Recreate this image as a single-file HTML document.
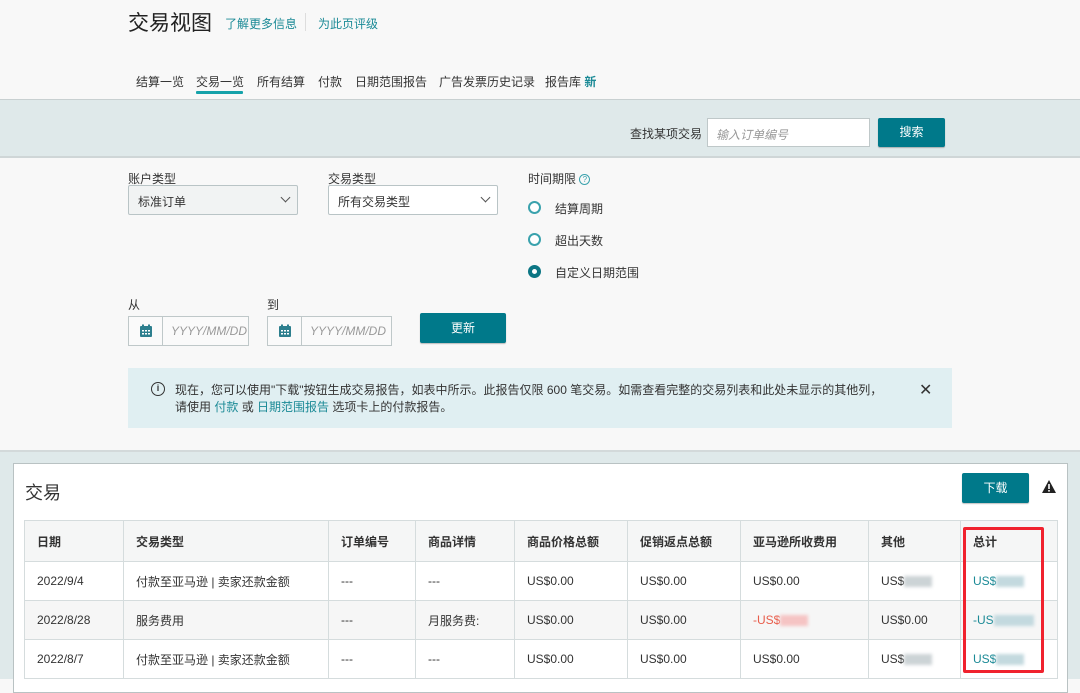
<!DOCTYPE html>
<html><head><meta charset="utf-8"><style>
*{box-sizing:border-box;margin:0;padding:0}
body{width:1080px;height:679px;overflow:hidden;background:#f8f8f8;font-family:"Liberation Sans","Noto Sans CJK SC",sans-serif;color:#333;font-size:12px;position:relative}
.a{position:absolute;white-space:nowrap}
.teal{color:#1b8a96}
.btn{position:absolute;background:#00798a;color:#fff;border-radius:2px;text-align:center;font-size:12px;box-shadow:0 1px 1px rgba(0,0,0,.25)}
.sel{position:absolute;height:30px;border:1px solid #b9c4c6;border-radius:2px;padding:7px 9px;font-size:12px}
.chev{position:absolute;right:8px;top:8px;width:7px;height:7px;border-right:1.5px solid #555;border-bottom:1.5px solid #555;transform:rotate(45deg)}
.radio{position:absolute;width:13px;height:13px;border-radius:50%;border:2px solid #3aa2ad;background:#fff}
table{border-collapse:collapse;position:absolute;left:24px;top:520px;width:1033px;table-layout:fixed}
td,th{border:1px solid #d5dcdd;height:39px;padding:0 12px;text-align:left;font-size:12px;color:#333}
th{background:#f5f6f6;font-weight:bold;height:41px}
tr:nth-child(odd) td{background:#f6f6f6}
.blur{display:inline-block;width:28px;height:11px;background:#ccd3d6;vertical-align:middle;filter:blur(1.5px)}
</style></head><body>
<div class="a" style="left:128px;top:7px;font-size:21px;color:#222">交易视图</div>
<div class="a teal" style="left:225px;top:15px">了解更多信息</div>
<div class="a" style="left:305px;top:13px;width:1px;height:18px;background:#ddd"></div>
<div class="a teal" style="left:318px;top:15px">为此页评级</div>
<div class="a" style="left:136px;top:73px;color:#333">结算一览</div>
<div class="a" style="left:196px;top:73px;color:#333">交易一览</div>
<div class="a" style="left:196px;top:91px;width:47px;height:3px;background:#15a2aa;border-radius:1px"></div>
<div class="a" style="left:257px;top:73px">所有结算</div>
<div class="a" style="left:318px;top:73px">付款</div>
<div class="a" style="left:355px;top:73px">日期范围报告</div>
<div class="a" style="left:439px;top:73px">广告发票历史记录</div>
<div class="a" style="left:545px;top:73px">报告库 <span class="teal" style="font-weight:bold">新</span></div>

<div class="a" style="left:0;top:99px;width:1080px;height:59px;background:#dfe9ea;border-top:1px solid #c8d0d1;border-bottom:2px solid #cfd6d7"></div>
<div class="a" style="left:630px;top:125px">查找某项交易</div>
<div class="a" style="left:707px;top:118px;width:163px;height:29px;background:#fff;border:1px solid #bfc8c9;padding:7px 8px;font-style:italic;color:#999">输入订单编号</div>
<div class="btn" style="left:878px;top:118px;width:67px;height:29px;line-height:29px">搜索</div>

<div class="a" style="left:128px;top:170px">账户类型</div>
<div class="sel" style="left:128px;top:185px;width:170px;background:#f1f3f3">标准订单<span class="chev"></span></div>
<div class="a" style="left:328px;top:170px">交易类型</div>
<div class="sel" style="left:328px;top:185px;width:170px;background:#fff">所有交易类型<span class="chev"></span></div>
<div class="a" style="left:528px;top:170px">时间期限 <span style="display:inline-block;width:11px;height:11px;border:1px solid #3aa2ad;border-radius:50%;font-size:8px;line-height:9px;text-align:center;color:#3aa2ad;vertical-align:middle">?</span></div>
<div class="radio" style="left:528px;top:201px"></div><div class="a" style="left:555px;top:200px">结算周期</div>
<div class="radio" style="left:528px;top:233px"></div><div class="a" style="left:555px;top:232px">超出天数</div>
<div class="radio" style="left:528px;top:265px;border:4px solid #0c7684"></div><div class="a" style="left:555px;top:264px">自定义日期范围</div>

<div class="a" style="left:128px;top:296px">从</div>
<div class="a" style="left:128px;top:316px;width:121px;height:30px;border:1px solid #bfc8c9;background:#fafafa">
 <div style="position:absolute;left:0;top:0;width:34px;height:28px;border-right:1px solid #bfc8c9"><svg width="14" height="14" viewBox="0 0 14 14" style="position:absolute;left:10px;top:7px"><rect x="1" y="2" width="12" height="11" rx="1" fill="#2d7f8e"/><rect x="3" y="0.5" width="2" height="3" fill="#2d7f8e"/><rect x="9" y="0.5" width="2" height="3" fill="#2d7f8e"/><g fill="#fff"><rect x="3" y="6" width="2" height="1.5"/><rect x="6" y="6" width="2" height="1.5"/><rect x="9" y="6" width="2" height="1.5"/><rect x="3" y="9" width="2" height="1.5"/><rect x="6" y="9" width="2" height="1.5"/><rect x="9" y="9" width="2" height="1.5"/></g></svg></div>
 <div style="position:absolute;left:42px;top:7px;font-style:italic;color:#999">YYYY/MM/DD</div></div>
<div class="a" style="left:267px;top:296px">到</div>
<div class="a" style="left:267px;top:316px;width:125px;height:30px;border:1px solid #bfc8c9;background:#fafafa">
 <div style="position:absolute;left:0;top:0;width:34px;height:28px;border-right:1px solid #bfc8c9"><svg width="14" height="14" viewBox="0 0 14 14" style="position:absolute;left:10px;top:7px"><rect x="1" y="2" width="12" height="11" rx="1" fill="#2d7f8e"/><rect x="3" y="0.5" width="2" height="3" fill="#2d7f8e"/><rect x="9" y="0.5" width="2" height="3" fill="#2d7f8e"/><g fill="#fff"><rect x="3" y="6" width="2" height="1.5"/><rect x="6" y="6" width="2" height="1.5"/><rect x="9" y="6" width="2" height="1.5"/><rect x="3" y="9" width="2" height="1.5"/><rect x="6" y="9" width="2" height="1.5"/><rect x="9" y="9" width="2" height="1.5"/></g></svg></div>
 <div style="position:absolute;left:42px;top:7px;font-style:italic;color:#999">YYYY/MM/DD</div></div>
<div class="btn" style="left:420px;top:313px;width:86px;height:30px;line-height:30px">更新</div>

<div class="a" style="left:128px;top:368px;width:824px;height:60px;background:#e0eff2"></div>
<div class="a" style="left:151px;top:382px;width:14px;height:14px;border:1.5px solid #333;border-radius:50%;font-size:9px;line-height:11px;text-align:center;font-weight:bold">i</div>
<div class="a" style="left:175px;top:382px;line-height:17px">现在，您可以使用"下载"按钮生成交易报告，如表中所示。此报告仅限 600 笔交易。如需查看完整的交易列表和此处未显示的其他列，<br>请使用 <span class="teal">付款</span> 或 <span class="teal">日期范围报告</span> 选项卡上的付款报告。</div>
<div class="a" style="left:919px;top:380px;font-size:16px;color:#333">✕</div>

<div class="a" style="left:0;top:450px;width:1080px;height:229px;background:#dfe9ea;border-top:2px solid #d3d9da"></div>
<div class="a" style="left:13px;top:463px;width:1055px;height:230px;background:#fff;border:1px solid #b9c2c3"></div>
<div class="a" style="left:25px;top:479px;font-size:18px;color:#333">交易</div>
<div class="btn" style="left:962px;top:473px;width:67px;height:30px;line-height:30px">下载</div>
<svg class="a" style="left:1041px;top:479px" width="16" height="15" viewBox="0 0 16 15"><path d="M8 1 L15 14 L1 14 Z" fill="#222"/><rect x="7.2" y="5" width="1.6" height="5" fill="#fff"/><rect x="7.2" y="11" width="1.6" height="1.6" fill="#fff"/></svg>

<table>
<colgroup><col style="width:99px"><col style="width:205px"><col style="width:87px"><col style="width:99px"><col style="width:113px"><col style="width:113px"><col style="width:128px"><col style="width:92px"><col style="width:97px"></colgroup>
<tr><th>日期</th><th>交易类型</th><th>订单编号</th><th>商品详情</th><th>商品价格总额</th><th>促销返点总额</th><th>亚马逊所收费用</th><th>其他</th><th>总计</th></tr>
<tr><td>2022/9/4</td><td>付款至亚马逊 | 卖家还款金额</td><td>---</td><td>---</td><td>US$0.00</td><td>US$0.00</td><td>US$0.00</td><td>US$<span class="blur"></span></td><td class="teal">US$<span class="blur" style="background:#c3d9df"></span></td></tr>
<tr><td>2022/8/28</td><td>服务费用</td><td>---</td><td>月服务费:</td><td>US$0.00</td><td>US$0.00</td><td style="color:#e85c4a">-US$<span class="blur" style="background:#f5c4c4"></span></td><td>US$0.00</td><td class="teal">-US<span class="blur" style="background:#c3d9df;width:40px"></span></td></tr>
<tr><td>2022/8/7</td><td>付款至亚马逊 | 卖家还款金额</td><td>---</td><td>---</td><td>US$0.00</td><td>US$0.00</td><td>US$0.00</td><td>US$<span class="blur"></span></td><td class="teal">US$<span class="blur" style="background:#c3d9df"></span></td></tr>
</table>
<div class="a" style="left:963px;top:527px;width:81px;height:146px;border:3px solid #f0222e;border-radius:2px"></div>
</body></html>
